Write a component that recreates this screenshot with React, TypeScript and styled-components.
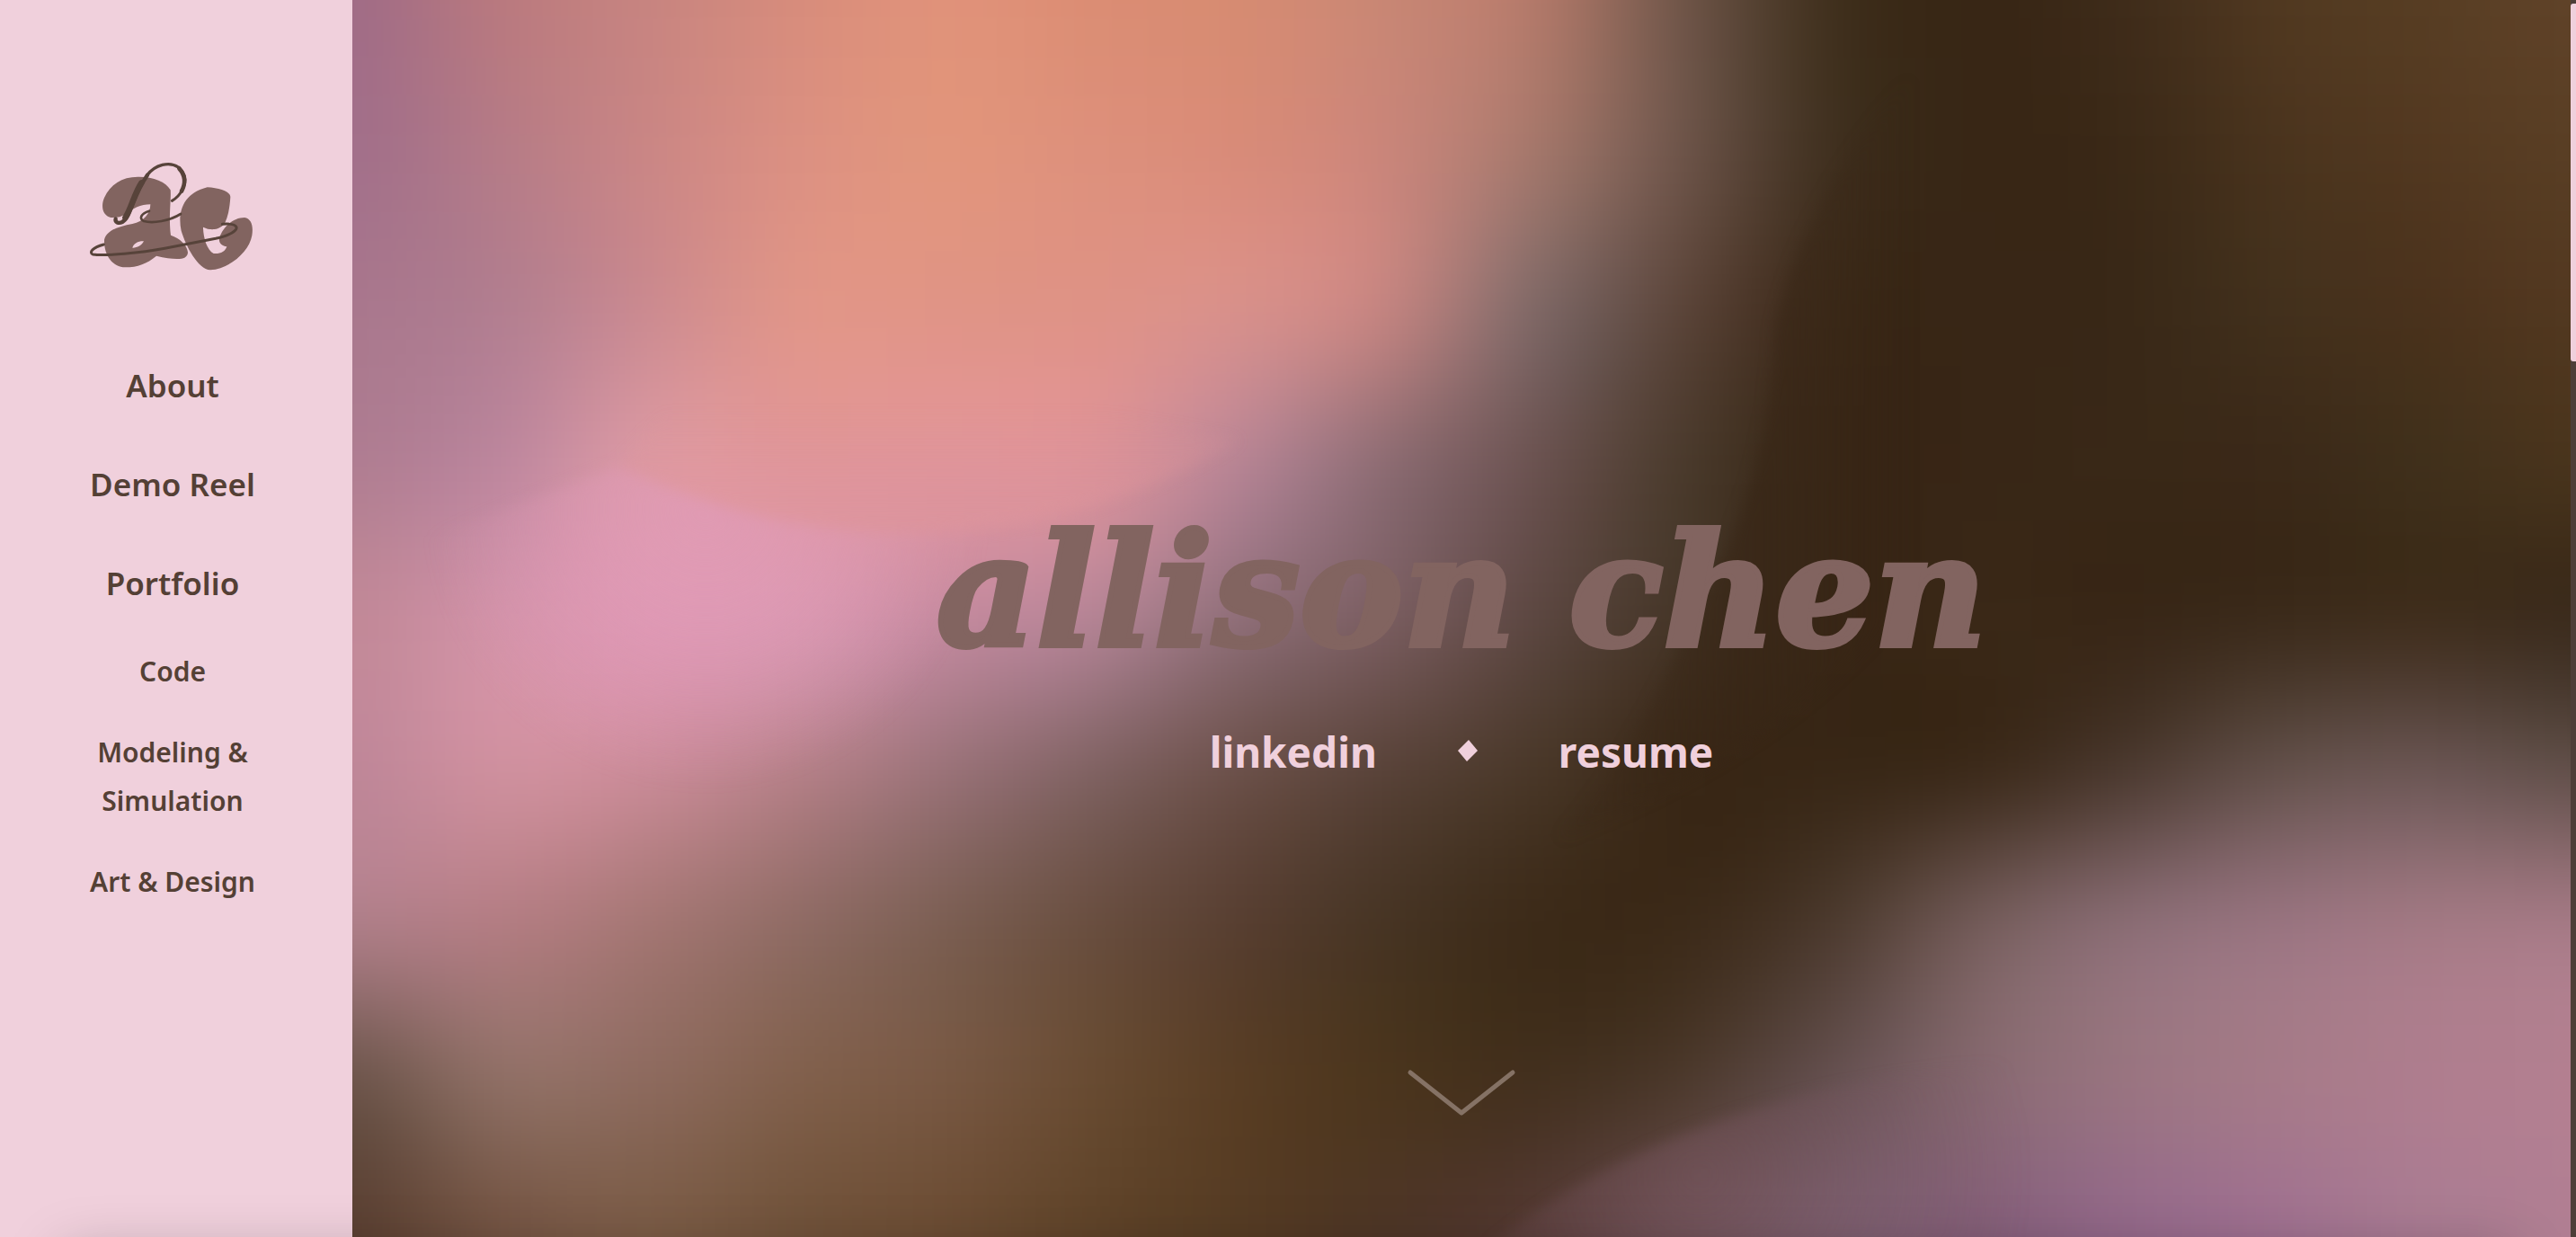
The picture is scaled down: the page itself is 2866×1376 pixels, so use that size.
import React from "react";
import styled, { createGlobalStyle } from "styled-components";

const pink = "#f0d0dc";
const brown = "#544035";
const mauve = "#826460";
const hand = `"Noto Sans", "Open Sans", sans-serif`;

const GlobalStyle = createGlobalStyle`
  *, *::before, *::after { box-sizing: border-box; }
  body { margin: 0; background: ${pink}; font-family: ${hand}; }
`;

const Page = styled.div`
  position: relative;
  display: flex;
  min-height: 100vh;
  overflow: hidden;
`;

const Sidebar = styled.aside`
  display: flex;
  flex-direction: column;
  align-items: center;
  flex: 0 0 392px;
  padding: 150px 28px 48px 20px;
  background: ${pink};
  color: ${brown};
`;

const LogoLink = styled.a`
  display: block;
  margin-bottom: 72px;
  padding-left: 6px;
  svg { display: block; width: 270px; height: 180px; }
`;

const NavList = styled.ul<{ $gap: number }>`
  display: flex;
  flex-direction: column;
  gap: ${(p) => p.$gap}px;
  margin: 0;
  padding: 0;
  list-style: none;
  text-align: center;
`;

const SubList = styled(NavList)`
  align-items: center;
  margin-top: 44px;
`;

const NavLink = styled.a<{ $sub?: boolean }>`
  display: block;
  max-width: 220px;
  color: inherit;
  font-size: ${(p) => (p.$sub ? 30 : 35)}px;
  font-weight: 600;
  line-height: 54px;
  text-decoration: none;
`;

const Hero = styled.main`
  position: relative;
  display: grid;
  flex: 1;
  grid-template-rows: 1fr auto 1fr;
  justify-items: center;
  min-width: 0;
  padding-top: 48px;
  overflow: hidden;
  background: #3a2817;
`;

const Backdrop = styled.svg`
  position: absolute;
  inset: 0;
  width: 100%;
  height: 100%;
`;

const Intro = styled.div`
  position: relative;
  grid-row: 2;
  text-align: center;
`;

const Title = styled.h1`
  margin: 0 0 48px;
  color: ${mauve};
  font-family: "DejaVu Serif", serif;
  font-size: 172px;
  font-style: italic;
  font-weight: 700;
  line-height: 200px;
  white-space: nowrap;
  -webkit-text-stroke: 6px ${mauve};
`;

const Links = styled.div`
  display: flex;
  align-items: center;
  justify-content: center;
  gap: 90px;
`;

const HeroLink = styled.a`
  color: ${pink};
  font-size: 46px;
  font-weight: 700;
  line-height: 60px;
  text-decoration: none;
`;

const Diamond = styled.svg`
  width: 22px;
  height: 28px;
`;

const ScrollDown = styled.a`
  position: relative;
  grid-row: 3;
  align-self: end;
  margin-bottom: 134px;
  svg { display: block; width: 122px; height: 54px; }
`;

const ScrollTrack = styled.div`
  flex: 0 0 6px;
  padding: 4px 0;
  background: #4e3e38;
`;

const ScrollThumb = styled.div`
  height: 398px;
  border-radius: 3px 0 0 3px;
  background: ${pink};
`;

const BottomShade = styled.div`
  position: absolute;
  right: 70px;
  bottom: -120px;
  left: 70px;
  height: 100px;
  box-shadow: 0 0 64px rgba(0, 0, 0, 0.26);
  pointer-events: none;
`;

type Rgb = [number, number, number];

const mesh: Rgb[][] = [
  "a06c86 b9797f c78480 d78c7c e0927a db8d74 d68b72 c88674 b3796a 6f5548 40301d 382615 3f2c1a 503820 573d23 5f4228",
  "a26f8a b57b87 ca8685 db9082 e1957c dd907c d88b79 c9857a a4776b 6d5449 40301f 382615 3b2917 49331d 523820 593e24",
  "a9778d b27e90 cb8a90 e09588 e09486 de9286 d8908a c48480 7f6866 5b4439 3b2918 382616 392817 42301c 4a321c 523820",
  "af7d91 bd869d dd9aa4 e0969a e0959a dc9298 b78494 8c6b72 6b5250 4a3a2c 382616 382616 392817 3b2918 40301b 49341c",
  "c18897 d292a8 df98b4 d998b0 c58a9f b58495 8f6e78 7a5d60 5c4741 453527 382616 3a2817 382616 3b2a1a 3f2d1c 3b2b1c",
  "be8698 cf909e ca8b98 b58088 9a7278 806262 6b5049 584238 493728 392716 382716 3c2a1a 4c3a30 63504a 6b5654 62504a",
  "ae7e88 b27c82 a47673 8f6b64 7b5e52 694e3f 573e30 463423 3c2a18 3c2a19 4c3a2e 745c5a 8b6d75 997480 a37984 a67a86",
  "6c544a 8f6f65 8d6a5e 81604c 785843 684b32 583d24 4b351d 43301e 4c392c 655050 866870 997480 a57a88 ae7d8e b37f90",
  "5a3f31 735342 7a5b45 70523a 6b4c33 5f4329 563c24 4e3627 553a34 6c4f54 7d6072 855f7a 93688a 9f7090 a97b92 b07e92",
].map((row) =>
  row.split(" ").map((hex) => [0, 2, 4].map((i) => parseInt(hex.slice(i, i + 2), 16)) as Rgb)
);

const clamp = (n: number, max: number) => Math.max(0, Math.min(max, n));

// Catmull-Rom curve through four neighbouring channel values
const spline = (a: number, b: number, c: number, d: number, t: number) =>
  b + 0.5 * t * (c - a + t * (2 * a - 5 * b + 4 * c - d + t * (3 * (b - c) + d - a)));

function meshColor(x: number, y: number) {
  const lastRow = mesh.length - 1;
  const col = Math.floor(x);
  const row = Math.floor(y);
  const channel = (k: number) => {
    const rows = [-1, 0, 1, 2].map((dr) => {
      const line = mesh[clamp(row + dr, lastRow)];
      const at = (dc: number) => line[clamp(col + dc, 15)][k];
      return spline(at(-1), at(0), at(1), at(2), x - col);
    });
    return Math.round(clamp(spline(rows[0], rows[1], rows[2], rows[3], y - row), 255));
  };
  return `rgb(${channel(0)}, ${channel(1)}, ${channel(2)})`;
}

const cells: React.ReactNode[] = [];
for (let r = -2; r <= 34; r++) {
  for (let c = -2; c <= 62; c++) {
    cells.push(
      <rect
        key={`${r}:${c}`}
        x={c * 22.5 - 11.5}
        y={r * 23.5 - 12}
        width={24}
        height={25}
        fill={meshColor(clamp(c / 4, 15), clamp(r / 4, 8))}
      />
    );
  }
}

function GradientArt() {
  return (
    <Backdrop viewBox="0 0 1350 753" preserveAspectRatio="none" aria-hidden="true">
      <defs>
        <filter id="melt" filterUnits="userSpaceOnUse" x="-60" y="-60" width="1470" height="880" colorInterpolationFilters="sRGB">
          <feGaussianBlur stdDeviation="14" />
        </filter>
        <filter id="soft" filterUnits="userSpaceOnUse" x="-50" y="-50" width="1450" height="900" colorInterpolationFilters="sRGB">
          <feGaussianBlur stdDeviation="4" />
        </filter>
        <linearGradient id="night" gradientUnits="userSpaceOnUse" x1="760" y1="0" x2="950" y2="0">
          <stop offset="0" stopColor="#382616" stopOpacity="0.2" />
          <stop offset="0.5" stopColor="#382616" stopOpacity="0.7" />
          <stop offset="1" stopColor="#382616" stopOpacity="0" />
        </linearGradient>
        <linearGradient id="peach" gradientUnits="userSpaceOnUse" x1="350" y1="250" x2="350" y2="322">
          <stop offset="0" stopColor="#e0959a" stopOpacity="0" />
          <stop offset="1" stopColor="#de959c" stopOpacity="0.65" />
        </linearGradient>
        <radialGradient id="rose" gradientUnits="userSpaceOnUse" cx="215" cy="310" r="170">
          <stop offset="0" stopColor="#df9ab6" stopOpacity="0.75" />
          <stop offset="1" stopColor="#df9ab6" stopOpacity="0" />
        </radialGradient>
        <radialGradient id="plum" gradientUnits="userSpaceOnUse" cx="820" cy="715" r="200">
          <stop offset="0" stopColor="#7a5862" stopOpacity="0.5" />
          <stop offset="1" stopColor="#7a5862" stopOpacity="0" />
        </radialGradient>
      </defs>
      <g filter="url(#melt)">{cells}</g>
      <g filter="url(#soft)">
        <path fill="url(#night)" d="M990 0C930 60 880 130 866 200C864 270 846 320 818 370C795 425 770 470 735 510C810 480 900 430 960 350Z" />
        <path fill="url(#rose)" d="M162 284C215 308 275 326 352 324L400 320L380 480L40 480L40 330Z" />
        <path fill="url(#peach)" d="M162 284C215 308 275 326 352 324C420 322 480 302 540 268L400 240L200 240Z" />
        <path fill="url(#plum)" d="M690 760C745 715 815 682 905 662C960 651 1010 645 1060 640L1060 760Z" />
      </g>
    </Backdrop>
  );
}

function Logo() {
  return (
    <svg viewBox="0 0 810 540" role="img" aria-label="ac logo">
      <path
        fillRule="evenodd"
        fill={mauve}
        d="M190 276C162 270 156 238 168 210C188 166 226 140 280 140C330 139 374 156 389 184C392 210 382 280 390 335C420 345 445 368 447 392C446 420 405 418 342 404C310 430 280 442 238 442C195 442 166 400 168 350C176 318 215 306 262 297C300 290 322 262 322 232C290 232 262 246 240 264C225 274 210 277 190 276ZM262 377C266 362 282 354 300 355C292 370 276 378 262 377Z"
      />
      <path
        fill={mauve}
        d="M512 175C550 177 589 188 589 208C587 240 582 270 571 293C560 312 530 324 498 308C498 340 510 385 533 396C555 398 572 390 577 373C553 369 547 352 555 336C570 300 604 276 636 276C660 280 666 306 661 336C652 390 585 448 522 451C480 448 440 370 425 320C412 260 430 195 512 175Z"
      />
      <g fill="none" stroke="#57433a" strokeLinecap="round">
        <path strokeWidth="13" d="M206 280C203 292 216 297 228 291C258 274 262 205 312 134" />
        <path strokeWidth="19" d="M238 276C258 246 268 195 292 160" />
        <path strokeWidth="10" d="M310 136C338 98 386 88 415 108C440 130 440 150 436 165" />
        <path strokeWidth="14" d="M418 112C438 134 440 162 426 188" />
        <path strokeWidth="9" d="M428 184C420 200 408 212 394 220" />
        <path strokeWidth="8" d="M318 254C290 262 283 280 300 288C330 296 385 288 423 264" />
        <path strokeWidth="9" d="M166 366C130 376 115 392 130 399C170 405 290 394 370 379L540 346C586 336 612 320 609 308C604 297 585 296 562 298" />
      </g>
    </svg>
  );
}

export default function App() {
  return (
    <>
      <GlobalStyle />
      <Page>
        <Sidebar>
          <LogoLink href="#home" aria-label="Home">
            <Logo />
          </LogoLink>
          <nav aria-label="Main">
            <NavList $gap={56}>
              <li><NavLink href="#about">About</NavLink></li>
              <li><NavLink href="#reel">Demo Reel</NavLink></li>
              <li>
                <NavLink href="#portfolio">Portfolio</NavLink>
                <SubList $gap={36}>
                  <li><NavLink $sub href="#code">Code</NavLink></li>
                  <li><NavLink $sub href="#modeling">Modeling &amp; Simulation</NavLink></li>
                  <li><NavLink $sub href="#art">Art &amp; Design</NavLink></li>
                </SubList>
              </li>
            </NavList>
          </nav>
        </Sidebar>
        <Hero>
          <GradientArt />
          <Intro>
            <Title>allison chen</Title>
            <Links>
              <HeroLink href="#linkedin">linkedin</HeroLink>
              <Diamond viewBox="0 0 22 28" aria-hidden="true">
                <path d="M12 1L22 13L10 25L0 13Z" fill={pink} />
              </Diamond>
              <HeroLink href="#resume">resume</HeroLink>
            </Links>
          </Intro>
          <ScrollDown href="#about" aria-label="Scroll down">
            <svg viewBox="0 0 122 54">
              <path d="M4 5L61 50L118 5" fill="none" stroke="#857265" strokeWidth="5" strokeLinecap="round" strokeLinejoin="round" />
            </svg>
          </ScrollDown>
        </Hero>
        <ScrollTrack aria-hidden="true">
          <ScrollThumb />
        </ScrollTrack>
        <BottomShade />
      </Page>
    </>
  );
}
